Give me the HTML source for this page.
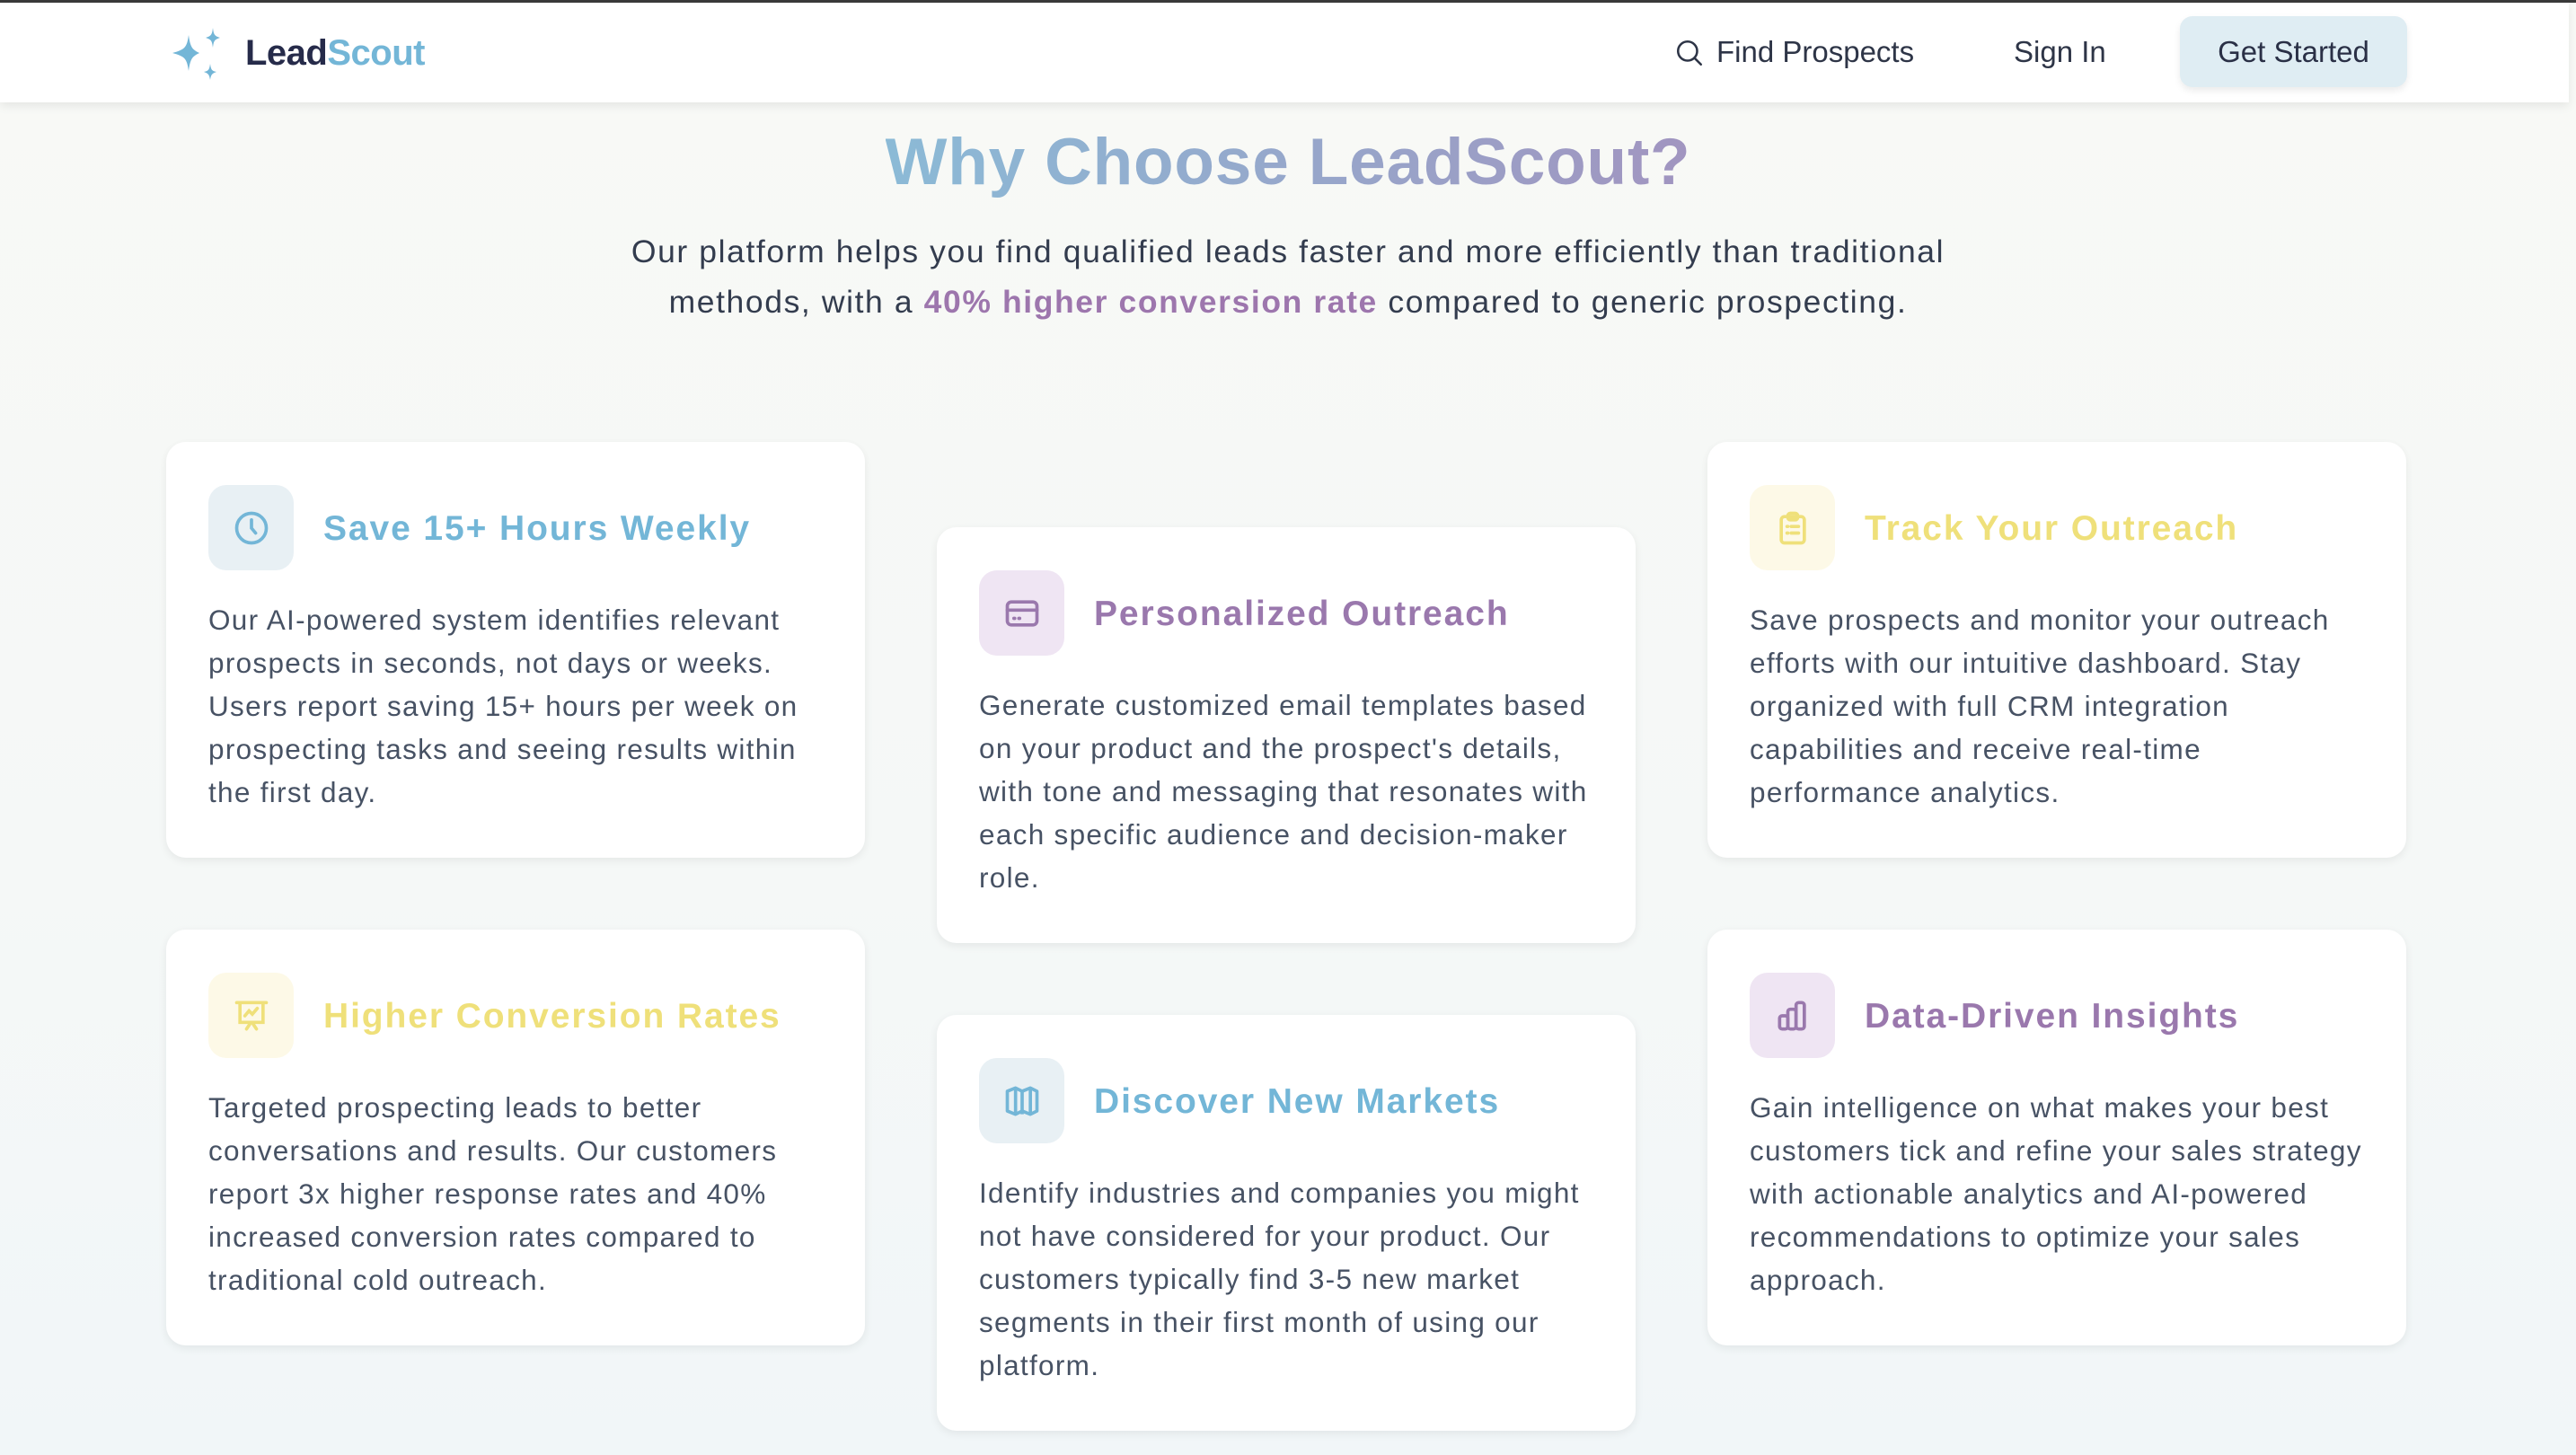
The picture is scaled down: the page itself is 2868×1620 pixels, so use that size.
<!DOCTYPE html>
<html><head><meta charset="utf-8"><style>
*{margin:0;padding:0;box-sizing:border-box}
html,body{width:2868px;height:1620px;overflow:hidden}
body{background:linear-gradient(180deg,#f8f9f6 0%,#f5f8f7 60%,#f1f6f8 100%);font-family:"Liberation Sans",sans-serif;position:relative;color:#3f4a5c}
.top{position:absolute;left:0;top:0;width:2868px;height:3px;background:#3a3a3a}
.hdr{position:absolute;left:0;top:3px;width:2860px;height:111px;background:#fff;box-shadow:0 4px 10px rgba(0,0,0,.08)}
.logo{position:absolute;left:190px;top:28px}
.brand{position:absolute;left:273px;top:34px;font-size:40px;font-weight:bold;letter-spacing:-0.5px;color:#262b4a}
.brand span{color:#73b6d7}
.nav{position:absolute;top:36px;font-size:33px;color:#2e3547}
.btn{position:absolute;left:2427px;top:18px;width:253px;height:79px;background:#dfedf3;border-radius:14px;box-shadow:0 4px 8px rgba(0,0,0,.08);font-size:33px;color:#2a3046;text-align:center;line-height:79px}
h1{position:absolute;left:0;width:2868px;top:139px;text-align:center;font-size:73px;font-weight:bold;letter-spacing:0.8px}
h1 span{background:linear-gradient(90deg,#8bbad6,#a195c0);-webkit-background-clip:text;background-clip:text;color:transparent}
.sub{position:absolute;left:0;width:2868px;top:252px;text-align:center;font-size:35.5px;line-height:56px;color:#333c4e;letter-spacing:1.6px}
.sub b{color:#9d76ad}
.card{position:absolute;width:778px;height:463px;background:#fff;border-radius:22px;box-shadow:0 3px 10px rgba(0,0,0,.07)}
.ib{position:absolute;left:47px;top:48px;width:95px;height:95px;border-radius:20px;display:flex;align-items:center;justify-content:center}
.ct{position:absolute;left:175px;top:75px;font-size:39px;font-weight:bold;letter-spacing:1.9px;white-space:nowrap}
.cb{position:absolute;left:47px;top:174px;font-size:31.5px;line-height:48px;white-space:nowrap;color:#475264;letter-spacing:1.3px}
.b .ib{background:#e8f0f4}.b .ct{color:#73b6d7}
.p .ib{background:#efe5f3}.p .ct{color:#9a78ad}
.y .ib{background:#fdf9e7}.y .ct{color:#efe07a}
</style></head><body>
<div class="top"></div>
<div class="hdr">
<svg class="logo" width="64" height="62" viewBox="0 0 64 62"><g fill="#73b6d7"><path d="M20 8 C22 22 24 24 32 28 C24 32 22 34 20 48 C18 34 16 32 2 28 C16 24 18 22 20 8Z"/><path d="M47 0 C48 8 49 9 55 11 C49 13 48 14 47 22 C46 14 45 13 39 11 C45 9 46 8 47 0Z"/><path d="M44 40 C45 47 46 48 51 49 C46 51 45 52 44 58 C43 52 42 51 37 49 C42 48 43 47 44 40Z"/></g></svg>
<div class="brand">Lead<span>Scout</span></div>
<svg style="position:absolute;left:1864px;top:38px" width="34" height="36" viewBox="0 0 24 24" fill="none" stroke="#2e3547" stroke-width="1.8" stroke-linecap="round"><circle cx="10.5" cy="10.5" r="7.5"/><path d="M16 16l5 5"/></svg>
<div class="nav" style="left:1911px">Find Prospects</div>
<div class="nav" style="left:2242px">Sign In</div>
</div>
<div class="btn">Get Started</div>
<h1><span>Why Choose LeadScout?</span></h1>
<div class="sub">Our platform helps you find qualified leads faster and more efficiently than traditional<br>methods, with a <b>40% higher conversion rate</b> compared to generic prospecting.</div>

<div class="card b" style="left:185px;top:492px"><div class="ib"><svg width="44" height="44" viewBox="0 0 24 24" fill="none" stroke="#73b6d7" stroke-width="2" stroke-linecap="round"><circle cx="12" cy="12" r="9"/><path d="M12 7v5l2.5 3"/></svg></div><div class="ct">Save 15+ Hours Weekly</div><div class="cb">Our AI-powered system identifies relevant<br>prospects in seconds, not days or weeks.<br>Users report saving 15+ hours per week on<br>prospecting tasks and seeing results within<br>the first day.</div></div>

<div class="card p" style="left:1043px;top:587px"><div class="ib"><svg width="44" height="44" viewBox="0 0 24 24" fill="none" stroke="#9a78ad" stroke-width="2" stroke-linecap="round"><rect x="3" y="5" width="18" height="14" rx="2.5"/><path d="M3 10h18"/><path d="M7 15h.5M10 15h.5"/></svg></div><div class="ct">Personalized Outreach</div><div class="cb">Generate customized email templates based<br>on your product and the prospect's details,<br>with tone and messaging that resonates with<br>each specific audience and decision-maker<br>role.</div></div>

<div class="card y" style="left:1901px;top:492px"><div class="ib"><svg width="44" height="44" viewBox="0 0 24 24" fill="none" stroke="#efe07a" stroke-width="2" stroke-linecap="round"><rect x="5" y="5" width="14" height="16" rx="2"/><rect x="9" y="3" width="6" height="4" rx="1.5"/><path d="M8.5 11h.5M11 11h4.5M8.5 15h.5M11 15h4.5"/></svg></div><div class="ct">Track Your Outreach</div><div class="cb">Save prospects and monitor your outreach<br>efforts with our intuitive dashboard. Stay<br>organized with full CRM integration<br>capabilities and receive real-time<br>performance analytics.</div></div>

<div class="card y" style="left:185px;top:1035px"><div class="ib"><svg width="44" height="44" viewBox="0 0 24 24" fill="none" stroke="#efe07a" stroke-width="2" stroke-linecap="round"><path d="M3 4h18M5 4v12h14V4M9 20l2-3M15 20l-2-3"/><path d="M8 12l2.5-3 2 2 3-3.5"/></svg></div><div class="ct">Higher Conversion Rates</div><div class="cb">Targeted prospecting leads to better<br>conversations and results. Our customers<br>report 3x higher response rates and 40%<br>increased conversion rates compared to<br>traditional cold outreach.</div></div>

<div class="card b" style="left:1043px;top:1130px"><div class="ib"><svg width="44" height="44" viewBox="0 0 24 24" fill="none" stroke="#73b6d7" stroke-width="2" stroke-linejoin="round"><path d="M3 6l5-2 4 2 5-2 4 2v12l-4 2-5-2-4 2-5-2z"/><path d="M8 4v16M12 6v14M17 4v16"/></svg></div><div class="ct">Discover New Markets</div><div class="cb">Identify industries and companies you might<br>not have considered for your product. Our<br>customers typically find 3-5 new market<br>segments in their first month of using our<br>platform.</div></div>

<div class="card p" style="left:1901px;top:1035px"><div class="ib"><svg width="44" height="44" viewBox="0 0 24 24" fill="none" stroke="#9a78ad" stroke-width="2" stroke-linejoin="round"><rect x="4" y="12" width="5" height="8" rx="1.5"/><rect x="9" y="8" width="5" height="12" rx="1.5"/><rect x="14" y="4" width="5" height="16" rx="1.5"/></svg></div><div class="ct">Data-Driven Insights</div><div class="cb">Gain intelligence on what makes your best<br>customers tick and refine your sales strategy<br>with actionable analytics and AI-powered<br>recommendations to optimize your sales<br>approach.</div></div>
</body></html>
